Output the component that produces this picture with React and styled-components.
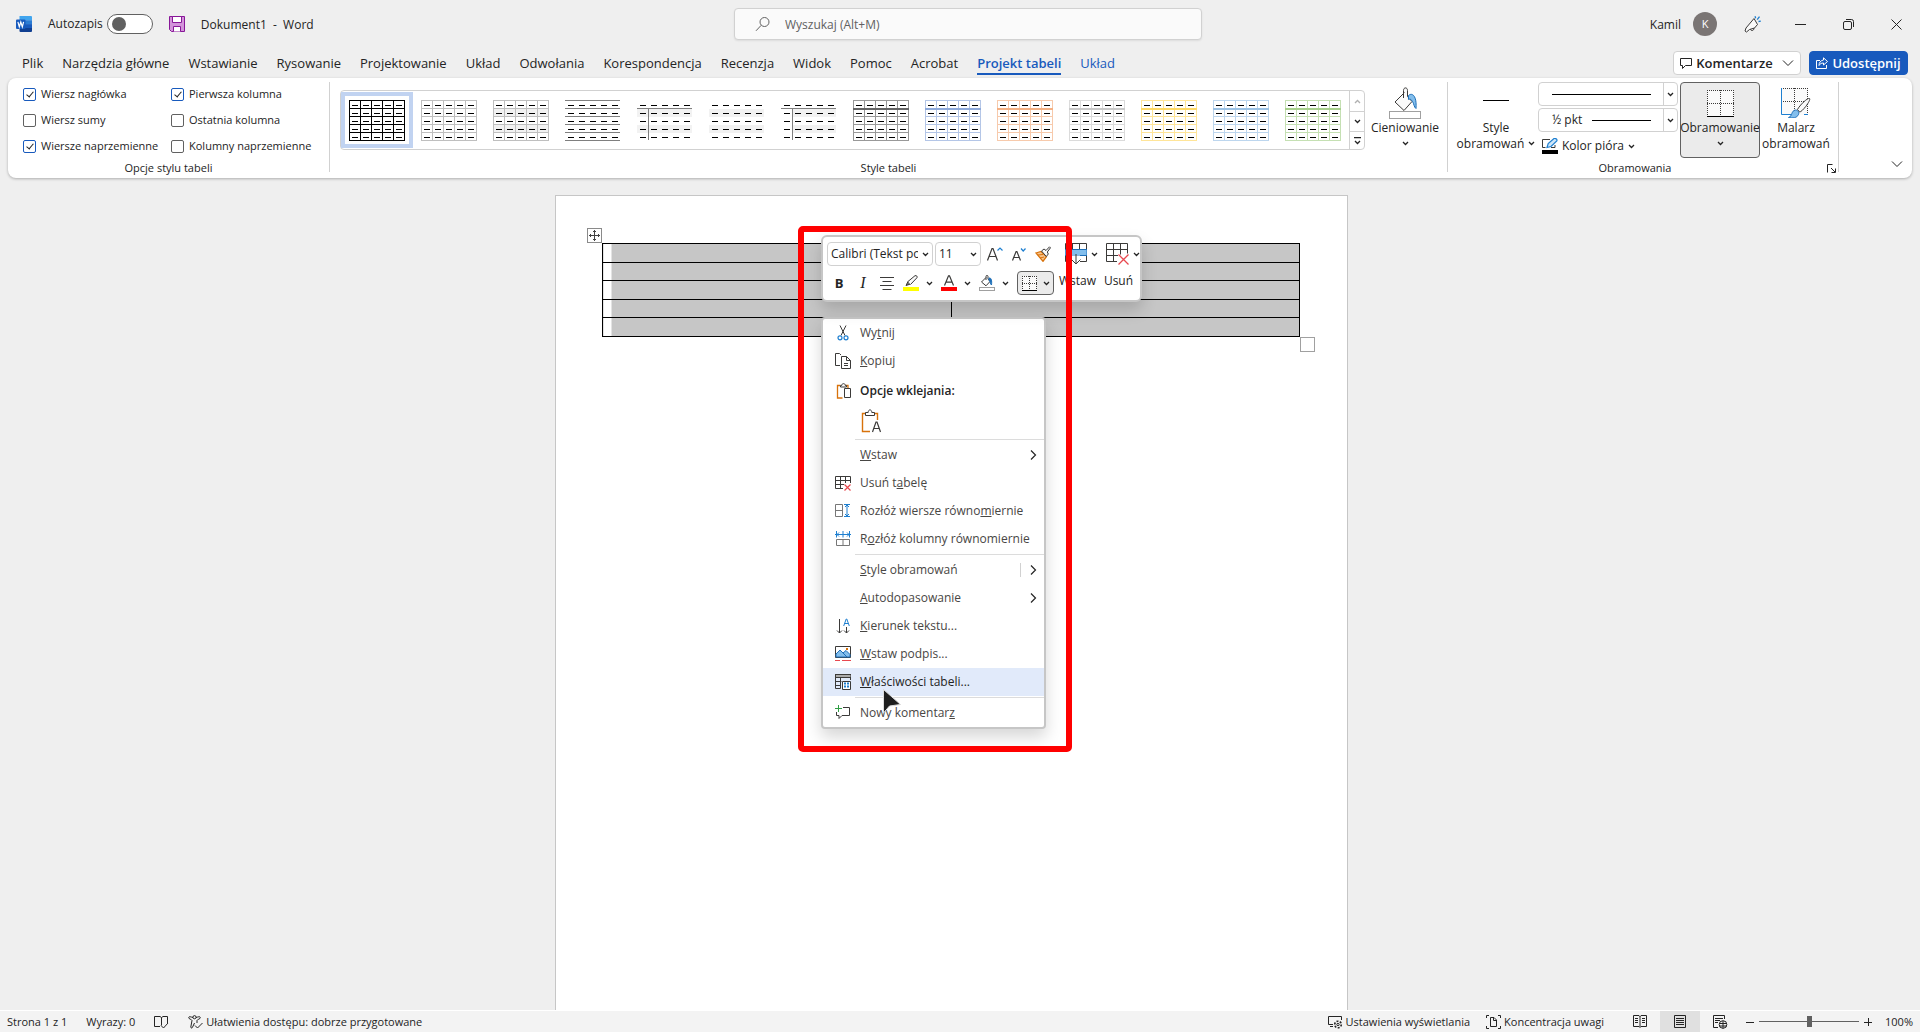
import React from "react";
import styled, { createGlobalStyle, css } from "styled-components";

const ink = "#242424";
const accent = "#185abd";
const line = "#d1d1d1";
const blue = "#1e7fd0";

const GlobalStyle = createGlobalStyle`
  *, *::before, *::after { box-sizing: border-box; }
  html, body { margin: 0; }
  body {
    background: #efefef;
    color: ${ink};
    font: 12px/16px "Open Sans", "Noto Sans", sans-serif;
  }
  button, input, select { font: inherit; color: inherit; margin: 0; }
  button { background: none; border: 0; padding: 0; }
  svg { display: block; flex: none; }
`;

const Window = styled.div`
  display: flex;
  flex-direction: column;
  height: 100vh;
  overflow: hidden;
`;

/* ---------- title bar ---------- */

const TitleBar = styled.header`
  display: grid;
  grid-template-columns: 718fr 468px 706fr;
  align-items: center;
  flex: none;
  height: 48px;
  padding: 0 12px 0 16px;
`;

const TitleLeft = styled.div`
  display: flex;
  align-items: center;
  gap: 16px;
`;

const SaveButton = styled.button`
  flex: none;
`;

const AutoSave = styled.label`
  display: flex;
  align-items: center;
  gap: 4px;
`;

const Toggle = styled.input`
  appearance: none;
  width: 46px;
  height: 20px;
  border: 1px solid #616161;
  border-radius: 10px;
  background: #fff;
  display: flex;
  align-items: center;
  padding: 0 4px;
  &::before {
    content: "";
    width: 14px;
    height: 14px;
    border-radius: 50%;
    background: #616161;
  }
`;

const SearchBox = styled.label`
  display: flex;
  align-items: center;
  gap: 14px;
  height: 32px;
  padding: 0 20px;
  border: 1px solid ${line};
  border-radius: 4px;
  background: #fafafa;
  box-shadow: 0 1px 2px rgba(0, 0, 0, 0.08);
`;

const SearchInput = styled.input`
  flex: 1;
  min-width: 0;
  border: 0;
  background: none;
  outline: 0;
  padding: 1px 0 0;
  &::placeholder { color: #616161; opacity: 1; }
`;

const TitleRight = styled.div`
  display: flex;
  align-items: center;
  justify-content: flex-end;
`;

const TitleText = styled.span`
  padding-top: 2px;
`;

const Avatar = styled.span`
  display: grid;
  place-items: center;
  width: 24px;
  height: 24px;
  margin: 0 11px 0 12px;
  border-radius: 50%;
  background: #7a7574;
  color: #fff;
  font-size: 11px;
`;

const CaptionButton = styled.button`
  display: grid;
  place-items: center;
  width: 48px;
  height: 32px;
  &:last-child { width: 24px; margin-left: 12px; }
`;

/* ---------- tabs ---------- */

const TabRow = styled.nav`
  display: flex;
  align-items: center;
  justify-content: space-between;
  flex: none;
  height: 30px;
  padding: 0 12px 0 22px;
`;

const Tabs = styled.div`
  display: flex;
  gap: 19px;
`;

const Tab = styled.button`
  height: 24px;
  padding-top: 2px;
  font-size: 13px;
  line-height: 20px;
  border-bottom: 2px solid ${(p) => (p.$active ? accent : "transparent")};
  color: ${(p) => (p.$active || p.$contextual ? accent : ink)};
  font-weight: ${(p) => (p.$active ? 600 : 400)};
`;

const TabActions = styled.div`
  display: flex;
  gap: 8px;
`;

const ActionButton = styled.button`
  display: flex;
  align-items: center;
  justify-content: center;
  gap: 4px;
  width: ${(p) => (p.$primary ? 99 : 128)}px;
  height: 24px;
  border: 1px solid ${(p) => (p.$primary ? accent : line)};
  border-radius: 4px;
  background: ${(p) => (p.$primary ? accent : "#fff")};
  color: ${(p) => (p.$primary ? "#fff" : ink)};
  font-size: 13px;
  font-weight: 600;
  svg:last-child:not(:first-child) { margin-left: 5px; }
`;

/* ---------- ribbon ---------- */

const Ribbon = styled.section`
  display: flex;
  flex: none;
  height: 100px;
  margin: 0 8px;
  padding: 4px 0 6px;
  border-radius: 8px;
  background: #fff;
  box-shadow: 0 1px 3px rgba(0, 0, 0, 0.28);
`;

const Group = styled.div`
  display: flex;
  flex-direction: column;
  flex: ${(p) => (p.$grow ? "1 1 0" : "none")};
  min-width: 0;
  width: ${(p) => p.$width || "auto"};
  border-right: 1px solid ${line};
`;

const GroupBody = styled.div`
  display: flex;
  flex: 1;
  min-height: 0;
  padding: 0 ${(p) => p.$end || 0}px 0 ${(p) => p.$start || 0}px;
`;

const GroupLabel = styled.div`
  position: relative;
  display: flex;
  justify-content: center;
  align-items: center;
  height: 8px;
  padding-right: ${(p) => p.$end || 0}px;
  font-size: 11px;
  line-height: 14px;
`;

const Launcher = styled.button`
  position: absolute;
  right: 2px;
  top: 0;
`;

const OptionGrid = styled.div`
  display: grid;
  grid-template-columns: 148px 148px;
  grid-auto-rows: 26px;
  padding-left: 15px;
`;

const CheckLabel = styled.label`
  display: flex;
  align-items: center;
  height: 24px;
  gap: 5px;
  font-size: 11px;
  white-space: nowrap;
`;

const Check = styled.input`
  appearance: none;
  position: relative;
  flex: none;
  width: 13px;
  height: 13px;
  border: 1px solid #616161;
  border-radius: 2px;
  background: #fff;
  &:checked { border-color: ${accent}; }
  &:checked::after {
    content: "";
    position: absolute;
    left: 4px;
    top: 1px;
    width: 4px;
    height: 7px;
    border: solid ${ink};
    border-width: 0 1px 1px 0;
    transform: rotate(40deg);
  }
`;

const Gallery = styled.div`
  display: flex;
  flex: 1;
  min-width: 0;
  height: 60px;
  margin: 8px 0 0 10px;
  border: 1px solid ${line};
  border-radius: 4px;
`;

const GalleryItems = styled.div`
  display: flex;
  flex: 1;
  overflow: hidden;
  align-items: center;
`;

const StyleCell = styled.button`
  display: grid;
  place-items: center;
  flex: none;
  width: 72px;
  height: 56px;
  border: 4px solid ${(p) => (p.$selected ? "#c1d3f1" : "transparent")};
`;

const Scroller = styled.div`
  display: grid;
  grid-template-rows: 20px 20px 18px;
  width: 15px;
  border-left: 1px solid ${line};
`;

const ScrollButton = styled.button`
  display: grid;
  place-items: center;
  &:not(:first-child) { border-top: 1px solid ${line}; }
`;

const BigButton = styled.button`
  display: flex;
  flex-direction: column;
  align-items: center;
  flex: none;
  width: ${(p) => p.$width || 80}px;
  height: 76px;
  padding-top: ${(p) => (p.$pressed ? 4 : 5)}px;
  border-radius: 4px;
  white-space: nowrap;
  ${(p) => p.$pressed && css`
    border: 1px solid #616161;
    background: #ebebeb;
  `}
`;

const BigIcon = styled.span`
  display: grid;
  place-items: center;
  height: 32px;
`;

const BigText = styled.span`
  display: flex;
  align-items: center;
  gap: 4px;
  height: 16px;
  padding-top: 1px;
`;

const PenColumn = styled.div`
  display: flex;
  flex-direction: column;
  gap: 2px;
  width: 140px;
  margin-right: 2px;
`;

const Combo = styled.label`
  display: grid;
  grid-template-columns: 1fr 14px;
  width: ${(p) => p.$width}px;
  height: 24px;
  border: 1px solid ${line};
  border-radius: 4px;
  background: #fff;
`;

const ComboSelect = styled.select`
  grid-area: 1 / 1 / 2 / 3;
  appearance: none;
  min-width: 0;
  width: 100%;
  border: 0;
  background: none;
  outline: 0;
  padding: 0 14px 0 ${(p) => p.$inset}px;
  color: ${(p) => (p.$blank ? "transparent" : ink)};
`;

const ComboRule = styled.span`
  grid-area: 1 / 1;
  align-self: center;
  height: 1px;
  margin: 0 12px 0 ${(p) => p.$from}px;
  background: #000;
  pointer-events: none;
`;

const ComboArrow = styled.span`
  grid-area: 1 / 2;
  display: grid;
  place-items: center;
  border-left: 1px solid ${(p) => (p.$plain ? "transparent" : line)};
  pointer-events: none;
`;

const PenColor = styled.button`
  display: flex;
  align-items: center;
  gap: 4px;
  height: 24px;
  padding-left: 4px;
`;

const Collapse = styled.button`
  width: 73px;
  display: flex;
  align-items: flex-end;
  justify-content: flex-end;
  padding: 0 9px 4px 0;
`;

/* ---------- document ---------- */

const Workspace = styled.main`
  display: flex;
  justify-content: center;
  flex: 1;
  min-height: 0;
  overflow: hidden;
  padding: 17px 17px 0 0;
`;

const Page = styled.article`
  position: relative;
  flex: none;
  width: 793px;
  padding: 47px 47px 0 46px;
  border: 1px solid #c6c6c6;
  border-bottom: 0;
  background: #fff;
`;

const DocTable = styled.table`
  width: 100%;
  border-collapse: collapse;
  table-layout: fixed;
  td {
    height: 19px;
    padding: 0;
    border: 1px solid #000;
    background: #c6c6c6;
  }
  tr:nth-child(even) td { height: 18px; }
  td:first-child { background: linear-gradient(90deg, #fff 8px, #c6c6c6 8px); }
`;

const MoveHandle = styled.button`
  position: absolute;
  left: 31px;
  top: 32px;
  display: grid;
  place-items: center;
  width: 15px;
  height: 15px;
  border: 1px solid #8a8a8a;
  background: #fff;
`;

const SizeHandle = styled.span`
  position: absolute;
  right: 32px;
  top: 141px;
  width: 15px;
  height: 15px;
  border: 1px solid #a0a0a0;
  background: #fff;
`;

const floating = css`
  position: absolute;
  left: 265px;
  border: 2px solid #c6c6c6;
  background: #fff;
  box-shadow: 0 8px 16px rgba(0, 0, 0, 0.16);
`;

const MiniToolbar = styled.div`
  ${floating}
  top: 39px;
  z-index: 2;
  display: flex;
  width: 321px;
  height: 67px;
  border-radius: 6px;
  padding: 5px 0 0 4px;
`;

const MiniRows = styled.div`
  display: flex;
  flex-direction: column;
  flex: none;
  gap: 5px;
  width: 230px;
`;

const MiniRow = styled.div`
  display: flex;
  align-items: center;
  gap: ${(p) => p.$gap}px;
  height: 24px;
  padding-left: ${(p) => (p.$inset ? 4 : 0)}px;
`;

const MiniButton = styled.button`
  display: flex;
  align-items: center;
  justify-content: center;
  gap: 7px;
  height: 24px;
  min-width: 16px;
`;

const BorderButton = styled(MiniButton)`
  gap: 6px;
  width: 37px;
  border: 1px solid #616161;
  border-radius: 4px;
  background: #ebebeb;
`;

const MiniLetter = styled.span`
  width: 16px;
  text-align: center;
  ${(p) => p.$italic
    ? css`font-family: "Liberation Serif", serif; font-style: italic; font-size: 16px;`
    : css`font-size: 13px; font-weight: 700;`}
`;

const MiniBig = styled.button`
  display: flex;
  flex-direction: column;
  align-items: center;
  gap: 8px;
  width: 41px;
  height: 52px;
  padding-top: 1px;
`;

const MiniBigIcon = styled.span`
  display: flex;
  align-items: center;
  gap: 4px;
  height: 22px;
  padding-left: 8px;
`;

const Menu = styled.div`
  ${floating}
  top: 121px;
  z-index: 1;
  width: 225px;
  border-radius: 4px;
`;

const MenuItem = styled.button`
  display: flex;
  gap: 9px;
  align-items: center;
  width: 100%;
  height: 28px;
  padding: 0 7px 0 12px;
  text-align: left;
  white-space: nowrap;
  color: ${(p) => (p.$active ? ink : "#484644")};
  background: ${(p) => (p.$active ? "#e1eafa" : "none")};
`;

const MenuIcon = styled.span`
  flex: none;
  width: 16px;
`;

const MenuText = styled.span`
  flex: 1;
`;

const MenuHeading = styled(MenuItem).attrs({ as: "div" })`
  height: 31px;
  color: ${ink};
  font-weight: 600;
`;

const PasteRow = styled.div`
  display: flex;
  align-items: center;
  height: 32px;
  padding: 0 0 2px 38px;
`;

const MenuRule = styled.hr`
  height: 1px;
  margin: 1px 0 1px 32px;
  border: 0;
  background: #dcdcdc;
`;

const SplitMark = styled.i`
  width: 1px;
  height: 14px;
  background: #d1d1d1;
`;

const RedFrame = styled.div`
  position: absolute;
  z-index: 3;
  left: 242px;
  top: 30px;
  width: 274px;
  height: 526px;
  border: 6px solid #f00;
  border-radius: 5px;
  pointer-events: none;
`;

const Pointer = styled.div`
  position: absolute;
  z-index: 4;
  left: 326px;
  top: 492px;
`;

/* ---------- status bar ---------- */

const StatusBar = styled.footer`
  display: flex;
  justify-content: space-between;
  flex: none;
  height: 22px;
  padding: 0 7px;
  border-top: 1px solid #fff;
  background: #f3f3f3;
  font-size: 11px;
`;

const StatusSide = styled.div`
  display: flex;
  align-items: center;
  gap: ${(p) => p.$gap}px;
`;

const StatusButton = styled.button`
  display: flex;
  align-items: center;
  gap: 3px;
  height: 21px;
  white-space: nowrap;
`;

const ViewButton = styled.button`
  display: grid;
  place-items: center;
  width: 40px;
  height: 21px;
  background: ${(p) => (p.$active ? "#e0e0e0" : "none")};
`;

const Zoom = styled.div`
  display: flex;
  align-items: center;
  gap: 5px;
  padding-left: 6px;
`;

const ZoomSlider = styled.input`
  appearance: none;
  width: 100px;
  height: 12px;
  background: linear-gradient(#616161, #616161) center / 100% 1px no-repeat;
  &::-webkit-slider-thumb {
    appearance: none;
    width: 5px;
    height: 11px;
    background: #616161;
  }
`;

const ZoomValue = styled.output`
  width: 32px;
  margin-left: 4px;
  text-align: right;
`;

/* ---------- drawings ---------- */

const Svg = ({ w = 16, h = w, children, ...rest }) => (
  <svg width={w} height={h} viewBox={`0 0 ${w} ${h}`} fill="none" stroke="#3b3a39" aria-hidden="true" {...rest}>
    {children}
  </svg>
);

const Chevron = ({ up, color = ink }) => (
  <Svg w={7} h={5} stroke={color} strokeWidth="1.3">
    <path d={up ? "M1 4l2.5-2.5L6 4" : "M1 1l2.5 2.5L6 1"} />
  </Svg>
);

const WideChevron = () => (
  <Svg w={12} h={8} stroke={ink}><path d="M1 1.5l5 5 5-5" /></Svg>
);

const WordLogo = () => (
  <Svg stroke="none">
    <path d="M3.5 0H15a1 1 0 0 1 1 1v3.3H3.5z" fill="#41a5ee" />
    <path d="M3.5 4.2H16v4H3.5z" fill="#2b7cd3" />
    <path d="M3.5 8.1H16v4H3.5z" fill="#185abd" />
    <path d="M3.5 12H16v3a1 1 0 0 1-1 1H4.500a1 1 0 0 1-1-1z" fill="#103f91" />
    <rect y="3.500" width="9.500" height="9.500" rx="1" fill="#185abd" />
    <path d="M1.900 5.800l1.400 5 1.500-4.800 1.500 4.800 1.300-5" stroke="#fff" strokeWidth="1.200" />
  </Svg>
);

const SaveIcon = () => (
  <Svg stroke="#881798">
    <path d="M.5.500h15v15H2.500l-2-2z" fill="#d394da" />
    <path d="M3.500.500h9v6h-9zM4.500 15.500v-5h7v5" fill="#fff" />
  </Svg>
);

const SearchIcon = () => (
  <Svg stroke="#616161"><circle cx="9.500" cy="6" r="4.500" /><path d="M6.200 9.300L1 14.800" /></Svg>
);

const PenSparkIcon = () => (
  <Svg w={17}>
    <path d="M10 2.500l3.500 6-3 3.500-5 1.500-3 2.500-1.500-1 1-3z" fill="#fafafa" />
    <path d="M6.500 13.300c.5 2 3.500 1.700 3.500-1.300" />
    <path d="M11 .2l.7 2M15.500.700l-2.300 3M16.800 5.200l-2.300.3" stroke={blue} strokeWidth="1.300" />
  </Svg>
);

const MinimizeIcon = () => <Svg w={11} stroke={ink}><path d="M0 5.500h11" /></Svg>;
const RestoreIcon = () => (
  <Svg w={11} stroke={ink}>
    <rect x=".5" y="2.500" width="8" height="8" rx="1.500" />
    <path d="M3 .5h5.500a2 2 0 0 1 2 2V8" />
  </Svg>
);
const CloseIcon = () => <Svg w={11} stroke={ink}><path d="M.5.500l10 10M10.500.500l-10 10" /></Svg>;

const CommentIcon = () => (
  <Svg w={12} stroke={ink}><path d="M.5 1.500h11v7h-6l-3 3v-3h-2z" /></Svg>
);
const ShareIcon = () => (
  <Svg w={12} stroke="#fff">
    <path d="M4 3.500H.500v8h10V8" />
    <path d="M7.500.800l4 3.700-4 3.500V6C5 6 4 7 3 8.500c0-3 1.500-5 4.500-5.500z" />
  </Svg>
);

const palette = {
  black: ["#000", "#000"],
  plain: ["#bfbfbf", "#bfbfbf"],
  dark: ["#999", "#666"],
  blue: ["#b4c6e7", "#8eaadb"],
  orange: ["#f7caac", "#f4b083"],
  gray: ["#dbdbdb", "#c9c9c9"],
  gold: ["#ffe599", "#ffd966"],
  sky: ["#bdd6ee", "#9cc2e5"],
  green: ["#c5e0b3", "#a8d08d"],
};

const TableThumb = ({ kind, tone = "plain" }) => {
  const [grid, head] = palette[tone];
  const five = [0, 1, 2, 3, 4];
  const six = [0, 1, 2, 3, 4, 5];
  const banded = ["banded", "headcol", "bands", "firstcol"].includes(kind);
  return (
    <Svg w={56} h={41} shapeRendering="crispEdges">
      {banded && [1, 3].map((r) => (
        <rect key={r} x={kind === "firstcol" ? 12 : 0} y={r * 8 + 1} width={kind === "firstcol" ? 43 : 55} height="8" fill="#f2f2f2" stroke="none" />
      ))}
      {["grid", "banded", "header"].includes(kind) && (
        <g stroke={grid}>
          {six.map((i) => <path key={i} d={`M${i * 11 + 0.5} 0v41M0 ${i * 8 + 0.5}h56`} />)}
        </g>
      )}
      {kind === "header" && <path d="M0 9h56" stroke={head} strokeWidth="2" />}
      {kind === "rules" && six.map((i) => <path key={i} d={`M0 ${i * 8 + 0.5}h55`} stroke="#7f7f7f" />)}
      {["headcol", "firstcol"].includes(kind) && <path d="M0 8.500h55M11.500 9v31" stroke="#7f7f7f" />}
      {five.map((r) => five.map((c) => (
        <path key={`${r}-${c}`} d={`M${c * 11 + 3} ${r * 8 + 5.500}h6`} stroke="#000" />
      )))}
    </Svg>
  );
};

const BucketIcon = () => (
  <Svg w={32}>
    <path d="M15.500 5.500L6 15l9 8.500 8-9-4.500-5V3.500c0-3.500-4-3.500-4 0V11" fill="#fafafa" />
    <path d="M19.500 8.500c4-3.500 8.500 1 7.500 13-2-1-2-5-3.500-7-1-2-3-3-4-2z" fill="#83beec" stroke="#1e6fb8" />
    <rect x=".5" y="24.500" width="31" height="7" fill="#fff" stroke="#a0a0a0" />
  </Svg>
);

const BorderLineIcon = () => <Svg w={26} h={32} stroke="#000"><path d="M0 13.500h26" /></Svg>;

const DottedGrid = ({ size = 27 }) => {
  const mid = Math.floor(size / 2) + 0.5;
  const e = size - 0.5;
  return (
    <Svg w={size} shapeRendering="crispEdges">
      <rect width={size} height={size} fill="#fafafa" stroke="none" />
      <path d={`M0 .5H${size}M.5 0V${size}M${e} 0V${size}`} strokeDasharray="1 1" />
      <path d={`M0 ${mid}H${size}M${mid} 0V${size}`} strokeDasharray="1 1" />
      <path d={`M0 ${e}H${size}`} stroke="#000" />
    </Svg>
  );
};

const PainterIcon = () => (
  <Svg w={30}>
    <rect width="27" height="27" fill="#fafafa" stroke="none" />
    <path d="M0 .5h27M26.500 0v27M0 13.500h27M13.500 0v27" strokeDasharray="1 1" />
    <path d="M.5 0v26.500H10M23 26.500h4" stroke={blue} />
    <path d="M28.500 10.500c2 1-7 13.500-10 13.500l-2-2.500c2-4 10-12 12-11z" fill="#fafafa" />
    <path d="M7.500 29.500c4-1 2.500-7 7-7.500 2 0 4 2 3 4.500-1.500 3.500-6 4-10 3z" fill="#83beec" stroke="#1e6fb8" />
  </Svg>
);

const PenColorIcon = () => (
  <Svg w={16}>
    <path d="M8 1.500H.500v8h3M13 7v2.500H9" />
    <path d="M5 9.500l1.200-4L12 .500c2-.500 3.500 1 2.800 2.500L9 8.500z" fill="#cfe6f8" stroke={blue} strokeWidth="1.200" />
    <path d="M0 12h16v4H0z" fill="#000" stroke="none" />
  </Svg>
);

const LauncherIcon = () => (
  <Svg w={9} stroke={ink}><path d="M.5 8.500v-8h5M4 4l4 4M8.500 4.500v4h-4" /></Svg>
);

const MoveIcon = () => (
  <Svg w={11} stroke="#444"><path d="M5.500 0v11M0 5.500h11M4 2l1.500-1.500L7 2M4 9l1.500 1.500L7 9M2 4L.500 5.500 2 7M9 4l1.500 1.500L9 7" /></Svg>
);

const GrowFont = () => (
  <Svg><path d="M.5 14.500L5 2.500h1l4.500 12M2.200 10.500h6.600" strokeWidth="1.200" /><path d="M10.500 4.500L13 2l2.500 2.500" stroke={blue} strokeWidth="1.200" /></Svg>
);
const ShrinkFont = () => (
  <Svg><path d="M1.500 14.500l3.600-9h.8l3.600 9M2.900 11.500h5.300" strokeWidth="1.200" /><path d="M10 2.500L12.200 5l2.300-2.500" stroke={blue} strokeWidth="1.200" /></Svg>
);
const BrushIcon = () => (
  <Svg>
    <path d="M1 7l5-1.500 5.500 5L8 15.300z" fill="#f8c48c" stroke="#d8720b" strokeWidth="1.300" />
    <path d="M3 9l5-.500M5 12l4-1" stroke="#d8720b" />
    <path d="M6.500 5L9 3l2 1.500L14.500.800l1 1L12.300 6l1 2-2 2.500z" fill="#fafafa" />
  </Svg>
);
const AlignIcon = () => <Svg><path d="M1 2.500h14M3.500 6.500h9M1 10.500h14M3.500 14.500h9" /></Svg>;
const HighlightIcon = () => (
  <Svg><path d="M0 12h16v4H0z" fill="#ff0" stroke="none" /><path d="M3 10.500l2-4 2.500 2.500z" fill="#777" /><path d="M5 6.500L12 .700c1.500-.500 2.500.600 2 2L7.500 9.500" fill="#fafafa" /></Svg>
);
const FontColorIcon = () => (
  <Svg><path d="M0 12h16v4H0z" fill="red" stroke="none" /><path d="M3.500 10.500L7.500.800h1l4 9.700M5 7.200h6" strokeWidth="1.200" /></Svg>
);
const SmallBucket = () => (
  <Svg><path d="M7 2.500L2.500 7 7 10.800 11 6.500 9 4V1.500C9 0 7 0 7 1.500V5" /><path d="M10 3c2.500-.500 3 3 2.500 7-1.500-1-1-4-2.500-5z" fill="#1e6fb8" stroke="#1e6fb8" /><rect x=".5" y="12.500" width="15" height="3" fill="#fff" stroke="#a0a0a0" /></Svg>
);
const InsertTableIcon = () => (
  <Svg w={22}><path d="M.500.500h21v18h-21zM7.500.500v18M14.500.500v18" /><path d="M0 6.500h22v6H0z" fill="#83beec" stroke="#1e6fb8" /><path d="M7 19.500v-7h8v7z" fill="#fff" stroke="none" /><path d="M11 11v10M6.500 16.500L11 21l4.500-4.500" /></Svg>
);
const DeleteTableIcon = () => (
  <Svg w={23} h={22}><path d="M11 18.500H.500V.500h21v10M0 6.500h21M0 12.500h12M7.500.500v18M14.500.500v11" /><path d="M12.500 11.500l10 10M22.500 11.500l-10 10" stroke="#e8484f" strokeWidth="1.300" /></Svg>
);

const CutIcon = () => (
  <Svg><path d="M5 .5l5 10M11 .500l-5 10" /><circle cx="5" cy="12.800" r="2" stroke={blue} strokeWidth="1.200" /><circle cx="11" cy="12.800" r="2" stroke={blue} strokeWidth="1.200" /></Svg>
);
const CopyIcon = () => (
  <Svg><path d="M5 12.500H.500V.500h4L6 2" /><path d="M6.500 3.500h5l4 4v8h-9zM11.500 3.500v4h4M9 10.500h4M9 12.500h4" /></Svg>
);
const PasteIcon = () => (
  <Svg><path d="M7.500 15H2.500V2.500h3M10 2.500h3V5" stroke="#d8720b" strokeWidth="1.300" /><path d="M5.500 4V2.500h1.200c0-2.500 3.600-2.500 3.600 0h1.200V4z" fill="#fff" /><path d="M9.500 5.500h6v9h-6z" fill="#fff" /></Svg>
);
const PasteTextIcon = () => (
  <Svg w={20} h={24}><path d="M9 22.500H1.500v-18H5M13 4.500h3.500V11" stroke="#d8720b" strokeWidth="1.400" /><path d="M4.500 6.500v-3h2.700c0-3.500 3.600-3.500 3.600 0h2.700v3z" fill="#fff" /><path d="M11.500 23L15 13h1l3.500 10M12.500 19.500h6" strokeWidth="1.200" /></Svg>
);
const DeleteIcon = () => (
  <Svg><path d="M8 13.500H.500v-12h15V8M0 5.500h15M0 9.500h9M5.500 1.500v12M10.500 1.500V8" /><path d="M9.500 9.500l6 6M15.500 9.500l-6 6" stroke="#e8484f" strokeWidth="1.200" /></Svg>
);
const RowsIcon = () => (
  <Svg><path d="M.5 1.500h7v12h-7zM.5 7.500h7" stroke="#777" /><path d="M9 1.500h6M9 13.500h6M12 2v11M10 4l2-2 2 2M10 11l2 2 2-2" stroke={blue} /></Svg>
);
const ColsIcon = () => (
  <Svg><path d="M1.500 8.500h13v6h-13zM8 8.500v6" stroke="#777" /><path d="M1.500 0v6.500M8 0v6.500M14.500 0v6.500M0 3.500h16M4 1.500L2 3.500l2 2M12 1.500l2 2-2 2" stroke={blue} /></Svg>
);
const DirectionIcon = () => (
  <Svg><path d="M4.500 1v14M2 12.500L4.500 15 7 12.500M11.500 9v6M9 12.500l2.500 2.500 2.500-2.500" /><path d="M8.700 8l2.500-7h.6l2.500 7M9.700 5.500h3.600" stroke={blue} /></Svg>
);
const CaptionIcon = () => (
  <Svg><path d="M.5.500h15v11H.500z" fill="#fff" /><path d="M1 10V8l4-4 7 7H1zM8 7l3-2.500L15 8.500V11h-3z" fill="#83beec" stroke="#1e6fb8" /><path d="M11 2h2v2h-2z" fill="#d8720b" stroke="none" /><path d="M0 14.500h5M7 14.500h9" stroke="#e8484f" /></Svg>
);
const PropertiesIcon = () => (
  <Svg><path d="M0 .5h16v3H0z" fill="#ababab" /><path d="M.500.500v14h5M.500 7.500h6M.500 11.500h5M5.500 3.500v11M15.500 3v3" /><path d="M7.500 7.500h8v8h-8z" fill="#fff" /><path d="M9 9.500h2M12 9.500h2M9 12.500h2M12 12.500h2" stroke={blue} strokeWidth="2" /></Svg>
);
const NewCommentIcon = () => (
  <Svg><path d="M8 2.500h6.500v8H7l-3 3v-3H1.500V7" /><path d="M3.500 0v7M0 3.500h7" stroke="#2f9e44" /></Svg>
);
const MenuArrow = () => <Svg w={7} h={10} stroke={ink}><path d="M1 .5L5.500 5 1 9.500" strokeWidth="1.200" /></Svg>;

const ArrowCursor = () => (
  <Svg w={20} h={27}>
    <path d="M1.500 1.500v23.500l6-7 11-1.500z" fill="#1f1f1f" stroke="#ddd" />
  </Svg>
);

const ProofIcon = () => (
  <Svg w={15} h={14} stroke={ink}><path d="M6 11.500H.500v-10H6l1.500 1 1.500-1h4.500V8M7.500 2.500v8M7 10.500l2.500 2.500 4.500-5" /></Svg>
);
const AccessIcon = () => (
  <Svg w={15} h={14} stroke={ink}><circle cx="6.500" cy="2.200" r="1.600" /><path d="M5 2.500C3 2 1 1 .700 2.500s3.300 2 3.300 3L2.800 12c0 1.500 1.500 1.200 1.700.200L6.500 8M8 2.500c2-.500 4-1.500 4.300 0s-3.300 2-3.300 3V8M7 10.500l2.500 2.500 5-5" /></Svg>
);
const DisplayIcon = () => (
  <Svg w={15} h={14} stroke={ink}><path d="M5 9.500H.500v-8h13V5" /><path d="M2 11.500h3" /><circle cx="10" cy="9.500" r="1.200" /><circle cx="10" cy="9.500" r="3.300" strokeWidth="1.600" strokeDasharray="2 1.400" /></Svg>
);
const FocusIcon = () => (
  <Svg w={15} h={14} stroke={ink}><path d="M3 .500H.500V3M12 .500h2.500V3M3 13.500H.500V11M12 13.500h2.500V11" /><path d="M4.500 2.500H8l2.500 2.500v6.500h-6zM7.500 2.500v3h3" /></Svg>
);
const ReadIcon = () => (
  <Svg w={14} h={13} stroke={ink}><path d="M.500.500H6l1 1 1-1h5.500v11H8l-1 1-1-1H.500zM7 1v11M2 3.500h3M2 5.500h3M2 7.500h3M9 3.500h3M9 5.500h3M9 7.500h3" /></Svg>
);
const PrintIcon = () => (
  <Svg w={12} h={13} stroke={ink}><path d="M.500.500h11v12H.500zM2 3.500h8M2 5.500h8M2 7.500h8M2 9.500h8" /></Svg>
);
const WebIcon = () => (
  <Svg w={15} h={14} stroke={ink}><path d="M5 12.500H.500V.500h11V4M2 3.500h8M2 5.500h5M2 7.500h3" /><circle cx="10" cy="9.500" r="3.800" /><path d="M6 8.500h8M6 11h8M10 6v7.500" /></Svg>
);

/* ---------- data ---------- */

const tabs = ["Plik", "Narzędzia główne", "Wstawianie", "Rysowanie", "Projektowanie", "Układ", "Odwołania", "Korespondencja", "Recenzja", "Widok", "Pomoc", "Acrobat"];

const options = [
  ["Wiersz nagłówka", true],
  ["Pierwsza kolumna", true],
  ["Wiersz sumy", false],
  ["Ostatnia kolumna", false],
  ["Wiersze naprzemienne", true],
  ["Kolumny naprzemienne", false],
];

const styles = [
  ["grid", "black"], ["grid", "plain"], ["banded", "plain"], ["rules"], ["headcol"], ["bands"], ["firstcol"],
  ["header", "dark"], ["header", "blue"], ["header", "orange"], ["header", "gray"], ["header", "gold"], ["header", "sky"], ["header", "green"],
];

const Item = ({ icon, pre = "", mark, post = "", arrow, split, active }) => (
  <MenuItem role="menuitem" $active={active}>
    <MenuIcon>{icon}</MenuIcon>
    <MenuText>{pre}<u>{mark}</u>{post}</MenuText>
    {split && <SplitMark />}
    {arrow && <MenuArrow />}
  </MenuItem>
);

const Dropdown = ({ label, value, width, inset, rule, blank, plain }) => (
  <Combo $width={width}>
    <ComboSelect aria-label={label} $inset={inset} $blank={blank}>
      <option>{value}</option>
    </ComboSelect>
    {rule && <ComboRule $from={rule} />}
    <ComboArrow $plain={plain}><Chevron /></ComboArrow>
  </Combo>
);

export default function App() {
  return (
    <Window>
      <GlobalStyle />
      <TitleBar>
        <TitleLeft>
          <WordLogo />
          <AutoSave>Autozapis<Toggle type="checkbox" role="switch" /></AutoSave>
          <SaveButton aria-label="Zapisz"><SaveIcon /></SaveButton>
          <TitleText>Dokument1&nbsp; -&nbsp; Word</TitleText>
        </TitleLeft>
        <SearchBox>
          <SearchIcon />
          <SearchInput type="search" aria-label="Wyszukaj" placeholder="Wyszukaj (Alt+M)" />
        </SearchBox>
        <TitleRight>
          <TitleText>Kamil</TitleText>
          <Avatar>K</Avatar>
          <CaptionButton aria-label="Pióro"><PenSparkIcon /></CaptionButton>
          <CaptionButton aria-label="Minimalizuj"><MinimizeIcon /></CaptionButton>
          <CaptionButton aria-label="Przywróć"><RestoreIcon /></CaptionButton>
          <CaptionButton aria-label="Zamknij"><CloseIcon /></CaptionButton>
        </TitleRight>
      </TitleBar>

      <TabRow>
        <Tabs>
          {tabs.map((t) => <Tab key={t}>{t}</Tab>)}
          <Tab $active>Projekt tabeli</Tab>
          <Tab $contextual>Układ</Tab>
        </Tabs>
        <TabActions>
          <ActionButton><CommentIcon />Komentarze<WideChevron /></ActionButton>
          <ActionButton $primary><ShareIcon />Udostępnij</ActionButton>
        </TabActions>
      </TabRow>

      <Ribbon>
        <Group $width="322px">
          <GroupBody>
            <OptionGrid>
              {options.map(([name, on]) => (
                <CheckLabel key={name}><Check type="checkbox" defaultChecked={on} />{name}</CheckLabel>
              ))}
            </OptionGrid>
          </GroupBody>
          <GroupLabel>Opcje stylu tabeli</GroupLabel>
        </Group>

        <Group $grow>
          <GroupBody $end={2}>
            <Gallery>
              <GalleryItems>
                {styles.map(([kind, tone], i) => (
                  <StyleCell key={i} $selected={i === 0} aria-label={`Styl ${i + 1}`}>
                    <TableThumb kind={kind} tone={tone} />
                  </StyleCell>
                ))}
              </GalleryItems>
              <Scroller>
                <ScrollButton aria-label="W górę"><Chevron up color="#b0b0b0" /></ScrollButton>
                <ScrollButton aria-label="W dół"><Chevron /></ScrollButton>
                <ScrollButton aria-label="Więcej">
                  <Svg w={7} h={8} stroke={ink} strokeWidth="1.3"><path d="M0 .500h7M1 4l2.500 2.500L6 4" /></Svg>
                </ScrollButton>
              </Scroller>
            </Gallery>
            <BigButton>
              <BigIcon><BucketIcon /></BigIcon>
              <BigText>Cieniowanie</BigText>
              <BigText><Chevron /></BigText>
            </BigButton>
          </GroupBody>
          <GroupLabel>Style tabeli</GroupLabel>
        </Group>

        <Group $width="391px">
          <GroupBody $start={6}>
            <BigButton $width={84}>
              <BigIcon><BorderLineIcon /></BigIcon>
              <BigText>Style</BigText>
              <BigText>obramowań<Chevron /></BigText>
            </BigButton>
            <PenColumn>
              <Dropdown label="Styl pióra" value="Linia" width={140} inset={13} rule={13} blank />
              <Dropdown label="Grubość pióra" value="½ pkt" width={140} inset={13} rule={53} />
              <PenColor><PenColorIcon />Kolor pióra<Chevron /></PenColor>
            </PenColumn>
            <BigButton $pressed>
              <BigIcon><DottedGrid size={27} /></BigIcon>
              <BigText>Obramowanie</BigText>
              <BigText><Chevron /></BigText>
            </BigButton>
            <BigButton $width={72}>
              <BigIcon><PainterIcon /></BigIcon>
              <BigText>Malarz</BigText>
              <BigText>obramowań</BigText>
            </BigButton>
          </GroupBody>
          <GroupLabel $end={16}>
            Obramowania
            <Launcher aria-label="Więcej opcji"><LauncherIcon /></Launcher>
          </GroupLabel>
        </Group>
        <Collapse aria-label="Zwiń wstążkę"><WideChevron /></Collapse>
      </Ribbon>

      <Workspace>
        <Page>
          <DocTable>
            <tbody>
              {[1, 2, 3, 4, 5].map((r) => <tr key={r}><td /><td /></tr>)}
            </tbody>
          </DocTable>
          <MoveHandle aria-label="Przenieś tabelę"><MoveIcon /></MoveHandle>
          <SizeHandle />

          <MiniToolbar role="toolbar">
            <MiniRows>
              <MiniRow $gap={2}>
                <Dropdown label="Czcionka" value="Calibri (Tekst podstawowy)" width={106} inset={3} plain />
                <Dropdown label="Rozmiar czcionki" value="11" width={46} inset={3} plain />
                <MiniRow $gap={8} $inset>
                  <MiniButton aria-label="Zwiększ czcionkę"><GrowFont /></MiniButton>
                  <MiniButton aria-label="Zmniejsz czcionkę"><ShrinkFont /></MiniButton>
                  <MiniButton aria-label="Malarz formatów"><BrushIcon /></MiniButton>
                </MiniRow>
              </MiniRow>
              <MiniRow $gap={8} $inset>
                <MiniButton aria-label="Pogrubienie"><MiniLetter>B</MiniLetter></MiniButton>
                <MiniButton aria-label="Kursywa"><MiniLetter $italic>I</MiniLetter></MiniButton>
                <MiniButton aria-label="Wyśrodkuj"><AlignIcon /></MiniButton>
                <MiniButton aria-label="Wyróżnienie"><HighlightIcon /><Chevron /></MiniButton>
                <MiniButton aria-label="Kolor czcionki"><FontColorIcon /><Chevron /></MiniButton>
                <MiniButton aria-label="Cieniowanie"><SmallBucket /><Chevron /></MiniButton>
                <BorderButton aria-label="Obramowanie"><DottedGrid size={15} /><Chevron /></BorderButton>
              </MiniRow>
            </MiniRows>
            <MiniBig><MiniBigIcon><InsertTableIcon /><Chevron /></MiniBigIcon>Wstaw</MiniBig>
            <MiniBig><MiniBigIcon><DeleteTableIcon /><Chevron /></MiniBigIcon>Usuń</MiniBig>
          </MiniToolbar>

          <Menu role="menu">
            <Item icon={<CutIcon />} pre="Wy" mark="t" post="nij" />
            <Item icon={<CopyIcon />} mark="K" post="opiuj" />
            <MenuHeading><PasteIcon /><span>Opcje wklejania:</span></MenuHeading>
            <PasteRow><button aria-label="Zachowaj tylko tekst"><PasteTextIcon /></button></PasteRow>
            <MenuRule />
            <Item mark="W" post="staw" arrow />
            <Item icon={<DeleteIcon />} pre="Usuń t" mark="a" post="belę" />
            <Item icon={<RowsIcon />} pre="Rozłóż wiersze równo" mark="m" post="iernie" />
            <Item icon={<ColsIcon />} pre="R" mark="o" post="złóż kolumny równomiernie" />
            <MenuRule />
            <Item mark="S" post="tyle obramowań" arrow split />
            <Item mark="A" post="utodopasowanie" arrow />
            <Item icon={<DirectionIcon />} mark="K" post="ierunek tekstu..." />
            <Item icon={<CaptionIcon />} mark="W" post="staw podpis..." />
            <Item icon={<PropertiesIcon />} mark="W" post="łaściwości tabeli..." active />
            <MenuRule />
            <Item icon={<NewCommentIcon />} pre="Nowy komentar" mark="z" />
          </Menu>
          <RedFrame />
          <Pointer><ArrowCursor /></Pointer>
        </Page>
      </Workspace>

      <StatusBar>
        <StatusSide $gap={19}>
          <StatusButton>Strona 1 z 1</StatusButton>
          <StatusButton>Wyrazy: 0</StatusButton>
          <StatusButton aria-label="Sprawdzanie"><ProofIcon /></StatusButton>
          <StatusButton><AccessIcon />Ułatwienia dostępu: dobrze przygotowane</StatusButton>
        </StatusSide>
        <StatusSide $gap={16}>
          <StatusButton><DisplayIcon />Ustawienia wyświetlania</StatusButton>
          <StatusButton><FocusIcon />Koncentracja uwagi</StatusButton>
          <StatusSide $gap={0}>
            <ViewButton aria-label="Czytanie"><ReadIcon /></ViewButton>
            <ViewButton aria-label="Układ wydruku" $active><PrintIcon /></ViewButton>
            <ViewButton aria-label="Układ sieci Web"><WebIcon /></ViewButton>
            <Zoom>
              <button aria-label="Pomniejsz"><Svg w={8} stroke={ink}><path d="M0 4.500h8" /></Svg></button>
              <ZoomSlider type="range" aria-label="Powiększenie" min="0" max="100" defaultValue="50" />
              <button aria-label="Powiększ"><Svg w={8} stroke={ink}><path d="M0 4.500h8M4.500 0v8" /></Svg></button>
              <ZoomValue>100%</ZoomValue>
            </Zoom>
          </StatusSide>
        </StatusSide>
      </StatusBar>
    </Window>
  );
}
